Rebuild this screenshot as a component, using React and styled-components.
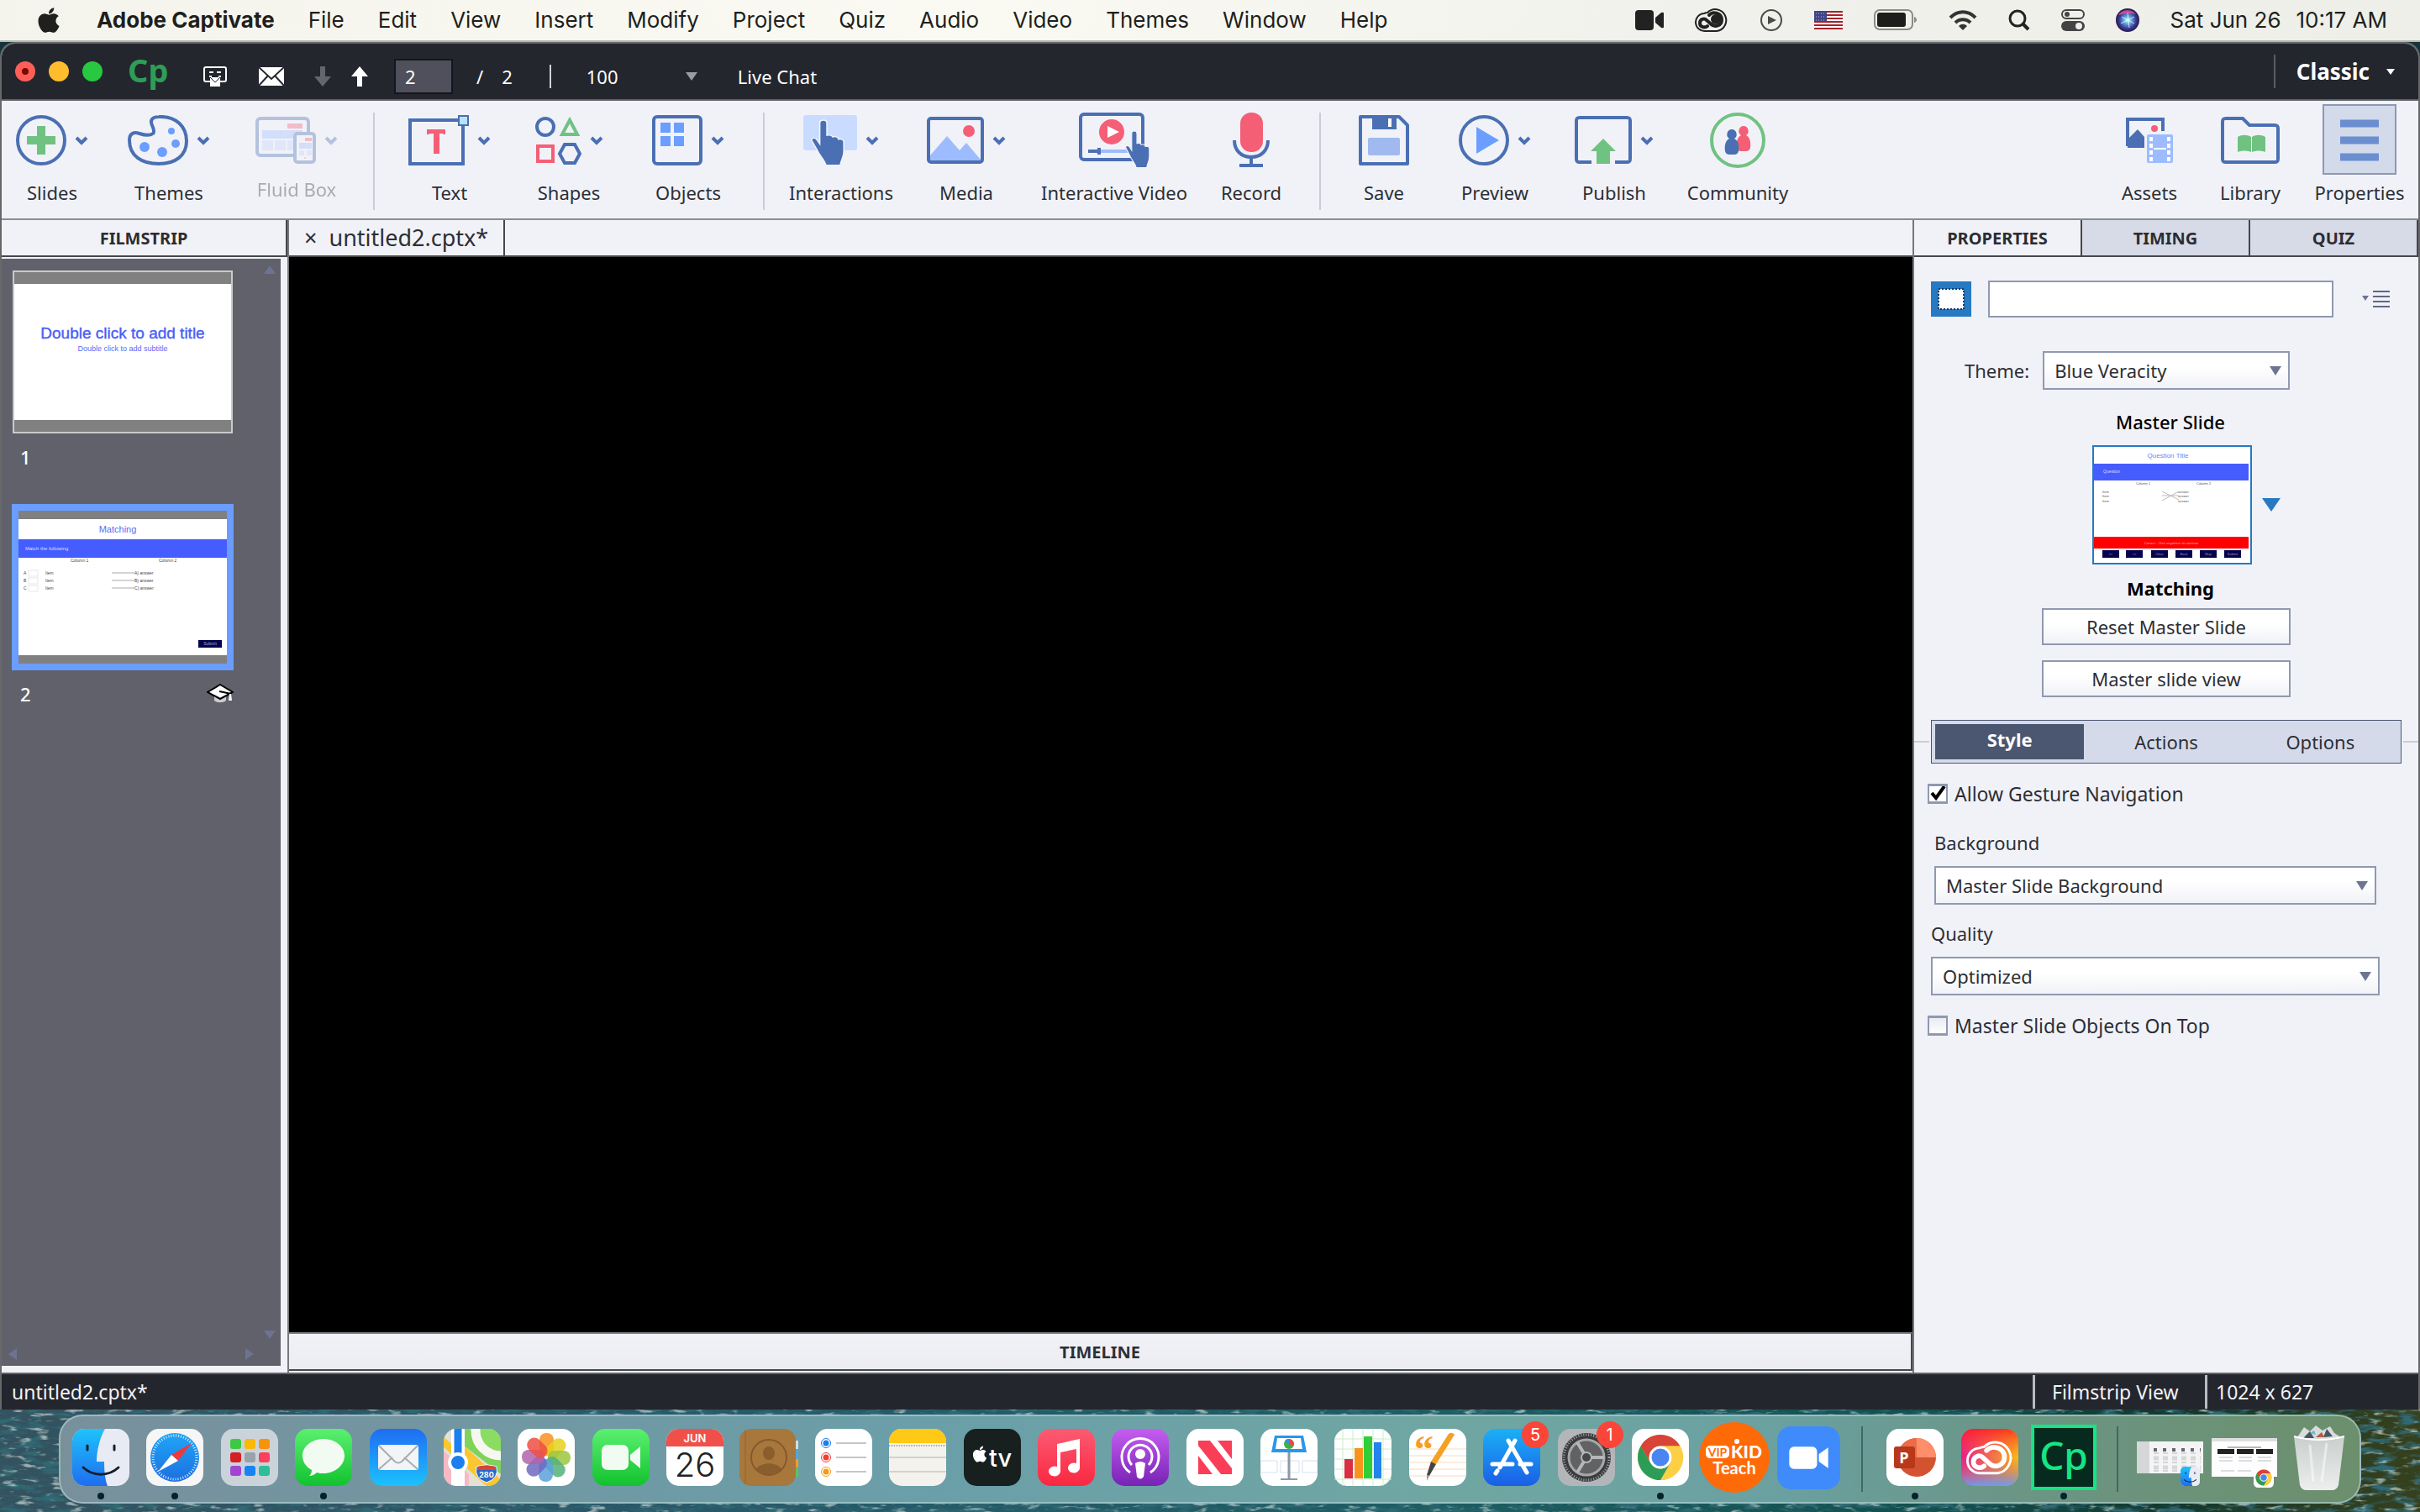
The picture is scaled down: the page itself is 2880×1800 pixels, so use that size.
import React from 'react';
import styled, { createGlobalStyle } from 'styled-components';
import { FaApple } from 'react-icons/fa';

const BLUE = '#4a6fb3';
const SOFT = '#9dbcff';
const MID = '#6c9eff';
const RED = '#f55f76';
const GREEN = '#70c281';

const GlobalStyle = createGlobalStyle`
  * { box-sizing: border-box; }
  body { margin: 0; background: #16333c; }
  button, input, select { font: inherit; color: inherit; margin: 0; }
  button { background: none; border: 0; padding: 0; }
  svg { display: block; flex: none; }
`;

const Desktop = styled.div`
  position: relative;
  display: flex;
  flex-direction: column;
  height: 100vh;
  overflow: hidden;
  font-family: 'Noto Sans', 'Open Sans', sans-serif;
  font-size: 22px;
  line-height: 28px;
  color: #2d2f35;
`;

const Wallpaper = styled.svg`
  position: absolute;
  left: 0;
  bottom: 0;
  width: 100%;
  height: 140px;
`;

/* ---------- mac menu bar ---------- */

const MenuBar = styled.header`
  display: flex;
  align-items: center;
  justify-content: space-between;
  height: 50px;
  padding: 0 39px 0 41px;
  background: linear-gradient(90deg, #f4f4ec, #fafaf2 40%, #f0f1ec 70%, #eeefe8);
  border-bottom: 2px solid #b5b6b1;
  font-family: Inter, sans-serif;
  font-size: 26px;
  color: #1f1f1d;
`;

const Menus = styled.nav`
  display: flex;
  align-items: center;
  gap: 40px;
`;

const MenuItem = styled.button`
  font-weight: ${p => (p.$bold ? 700 : 400)};
`;

const Tray = styled.div`
  display: flex;
  align-items: center;
  gap: 37px;
`;

const Clock = styled.div`
  display: flex;
  gap: 18px;
`;

/* ---------- captivate window ---------- */

const Window = styled.div`
  position: relative;
  flex: 1;
  min-height: 0;
  display: flex;
  flex-direction: column;
  border: 2px solid #67686a;
  border-bottom: 0;
  border-radius: 18px 18px 0 0;
  overflow: hidden;
  background: #f1f2f8;
`;

const TitleBar = styled.div`
  display: flex;
  align-items: center;
  height: 68px;
  padding: 0 28px 0 16px;
  background: #24262e;
  border-bottom: 2px solid #626366;
  color: #fff;
`;

const Lights = styled.div`
  display: flex;
  gap: 16px;
`;

const Light = styled.button`
  display: grid;
  place-items: center;
  width: 24px;
  height: 24px;
  border-radius: 50%;
  background: ${p => p.$color};
  &::after {
    content: '';
    width: 8px;
    height: 8px;
    border-radius: 50%;
    background: ${p => (p.$dirty ? '#7c0800' : 'transparent')};
  }
`;

const CpLogo = styled.div`
  margin-left: 30px;
  width: 90px;
  font-size: 38px;
  line-height: 62px;
  padding-bottom: 4px;
  font-weight: 700;
  color: #2e9e57;
`;

const TitleTools = styled.div`
  display: flex;
  align-items: center;
  height: 100%;
  padding-top: 12px;
`;

const IconButton = styled.button`
  margin-right: ${p => p.$gap}px;
`;

const PageInput = styled.input`
  width: 70px;
  height: 42px;
  padding: 0 11px;
  background: #4f505c;
  border: 2px solid #15161b;
  color: #fff;
`;

const PageTotal = styled.div`
  display: flex;
  gap: 22px;
  padding: 0 44px 0 28px;
`;

const Bar = styled.div`
  width: 2px;
  height: ${p => p.$h}px;
  background: ${p => p.$color};
`;

const Zoom = styled.div`
  display: flex;
  align-items: center;
  width: 222px;
  padding-left: 42px;
  gap: 80px;
`;

const Caret = styled.span`
  width: 0;
  height: 0;
  border: ${p => p.$s}px solid transparent;
  border-bottom: 0;
  border-top: ${p => p.$t}px solid ${p => p.$color};
`;

const Workspace = styled.button`
  display: flex;
  align-items: center;
  gap: 20px;
  margin-left: auto;
  height: 40px;
  padding-left: 25px;
  border-left: 2px solid #5b5d64;
  font-size: 26px;
  font-weight: 700;
`;

/* ---------- toolbar ---------- */

const Toolbar = styled.div`
  display: flex;
  height: 142px;
  padding: 4px 2px 0 0;
  border-bottom: 2px solid #8b8c8f;
`;

const Divider = styled.div`
  width: 2px;
  height: 116px;
  margin: 10px 18px 0;
  background: #cbcdd6;
`;

const Tool = styled.button`
  width: ${p => p.$w}px;
  display: flex;
  flex-direction: column;
  align-items: center;
  opacity: ${p => (p.disabled ? 0.36 : 1)};
  white-space: nowrap;
`;

const ToolIcon = styled.span`
  display: flex;
  align-items: center;
  justify-content: center;
  gap: 10px;
  min-width: 88px;
  height: 84px;
  padding-top: 2px;
  border: 2px solid ${p => (p.$active ? '#8d98b2' : 'transparent')};
  background: ${p => (p.$active ? '#d3daea' : 'transparent')};
`;

const ToolLabel = styled.span`
  line-height: ${p => (p.$raised ? 34 : 42)}px;
`;

const Spacer = styled.div`
  flex: 1;
`;

/* ---------- panels ---------- */

const Main = styled.div`
  flex: 1;
  min-height: 0;
  display: grid;
  grid-template-columns: 340px 1fr 602px;
  border-bottom: 2px solid #636467;
`;

const Column = styled.section`
  display: flex;
  flex-direction: column;
  min-width: 0;
  min-height: 0;
  border-left: ${p => (p.$line ? '2px solid #77787b' : '0')};
`;

const Header = styled.div`
  display: flex;
  height: 44px;
  flex: none;
  border-bottom: 2px solid #45474b;
`;

const PanelTab = styled.button`
  flex: 1;
  padding-top: 2px;
  font-size: 20px;
  font-weight: 700;
  color: #2b2d31;
  background: ${p => (p.$dim ? '#d7dae7' : 'transparent')};
  border-right: 2px solid #45474b;
`;

const DocTab = styled.div`
  display: flex;
  align-items: center;
  gap: 14px;
  padding: 0 18px;
  border-right: 2px solid #45474b;
  font-size: 27px;
`;

const Strip = styled.div`
  flex: 1;
  display: grid;
  grid-template-columns: 1fr 26px;
  grid-template-rows: 1fr 28px;
  margin: 2px 8px 8px 0;
  background: #60616a;
`;

const Slides = styled.div`
  padding: 14px 0 0 12px;
  color: #fff;
`;

const Slide = styled.div`
  width: 264px;
  margin-bottom: 34px;
`;

const Thumb = styled.button`
  display: block;
  width: ${p => (p.$active ? 264 : 262)}px;
  height: ${p => (p.$active ? 198 : 194)}px;
  margin: 0 auto;
  border: ${p => (p.$active ? '8px solid #6a9dff' : '2px solid #c9cacc')};
`;

const SlideFoot = styled.div`
  display: flex;
  align-items: center;
  justify-content: space-between;
  height: 44px;
  margin-top: 6px;
  padding-left: 10px;
  font-weight: 500;
`;

const Scroll = styled.div`
  display: flex;
  flex-direction: ${p => (p.$across ? 'row' : 'column')};
  align-items: center;
  justify-content: space-between;
  padding: ${p => (p.$across ? '0 6px 0 8px' : '8px 6px 4px')};
`;

const Stage = styled.main`
  flex: 1;
  background: #000;
`;

const Timeline = styled.button`
  height: 46px;
  margin-bottom: 2px;
  padding-top: 2px;
  flex: none;
  border-top: 2px solid #7e7f80;
  border-bottom: 2px solid #45474b;
  border-right: 2px solid #45474b;
  font-size: 20px;
  font-weight: 700;
  background: linear-gradient(#f1f2f8, #ececf2);
`;

/* ---------- properties ---------- */

const Props = styled.div`
  padding-top: 28px;
`;

const NameRow = styled.div`
  display: flex;
  align-items: center;
  padding: 0 33px 0 20px;
`;

const NameInput = styled.input`
  flex: 1;
  height: 44px;
  margin: 0 34px 0 20px;
  background: #fff;
  border: 2px solid #8f99af;
`;

const ThemeRow = styled.div`
  display: flex;
  align-items: center;
  gap: 16px;
  margin: 40px 0 24px 60px;
`;

const SelectBox = styled.div`
  position: relative;
  width: ${p => p.$w}px;
  select {
    appearance: none;
    width: 100%;
    height: 46px;
    padding: 0 12px;
    border: 2px solid #8f99af;
    border-radius: 0;
    background: linear-gradient(#fff 40%, #f1f2f7);
  }
  &::after {
    content: '';
    position: absolute;
    right: 10px;
    top: 18px;
    border: 7px solid transparent;
    border-top: 11px solid #6d7592;
    border-bottom: 0;
    pointer-events: none;
  }
`;

const MasterTitle = styled.div`
  text-align: center;
  padding-left: 10px;
  color: #000;
  font-weight: ${p => (p.$bold ? 700 : 500)};
`;

const MasterRow = styled.div`
  display: flex;
  align-items: center;
  gap: 12px;
  margin: 14px 0 14px 212px;
`;

const MasterThumb = styled.button`
  width: 190px;
  height: 142px;
  border: 2px solid #2779c2;
`;

const MasterButton = styled.button`
  display: block;
  width: 296px;
  height: 44px;
  margin: 10px 0 18px 152px;
  border: 2px solid #8f99af;
  background: linear-gradient(#fff 40%, #f1f2f7);
`;

const SubTabs = styled.div`
  display: flex;
  align-items: center;
  margin-top: 27px;
  &::before, &::after {
    content: '';
    height: 2px;
    flex: 0 0 18px;
    background: #cdced4;
  }
`;

const SubTabGroup = styled.div`
  flex: 1;
  display: grid;
  grid-template-columns: repeat(3, 1fr);
  height: 52px;
  margin: 0 2px;
  padding: 4px;
  background: #d5daea;
  border: 1px solid #4b5670;
`;

const SubTab = styled.button`
  padding-bottom: ${p => (p.$active ? 6 : 0)}px;
  margin-right: ${p => (p.$active ? 6 : 0)}px;
  background: ${p => (p.$active ? '#4b5670' : 'transparent')};
  color: ${p => (p.$active ? '#fff' : 'inherit')};
  font-weight: ${p => (p.$active ? 700 : 400)};
`;

const Check = styled.label`
  display: flex;
  align-items: center;
  gap: 8px;
  margin: 22px 0 0 16px;
  font-size: 23px;
  input {
    appearance: none;
    width: 24px;
    height: 24px;
    border: 2px solid #8f99af;
    border-width: 3px 2px;
    background: linear-gradient(#e9ebf3, #fff);
  }
  input:checked {
    background: url("data:image/svg+xml,%3Csvg xmlns='http://www.w3.org/2000/svg' viewBox='0 0 20 18'%3E%3Cpath d='M3 8l5 6L18 0' fill='none' stroke='%23000' stroke-width='4'/%3E%3C/svg%3E") #fff;
  }
`;

const Field = styled.div`
  margin: ${p => p.$top}px 0 0 ${p => p.$left}px;
  label {
    display: block;
    margin-bottom: 14px;
  }
`;

const StatusBar = styled.footer`
  position: relative;
  display: flex;
  align-items: center;
  justify-content: space-between;
  height: 42px;
  flex: none;
  padding-left: 12px;
  background: #24262e;
  color: #f2f2f4;
  font-size: 23px;
`;

const StatusInfo = styled.div`
  display: flex;
  line-height: 40px;
  span {
    padding-left: 20px;
    border-left: 3px solid #b9bac2;
  }
  span:first-child { width: 205px; }
  span:last-child { width: 254px; padding-left: 10px; }
`;

/* ---------- dock ---------- */

const DockArea = styled.div`
  position: relative;
  height: 122px;
  flex: none;
  padding: 6px 70px 0;
`;

const Dock = styled.div`
  display: flex;
  align-items: center;
  justify-content: space-between;
  height: 106px;
  padding: 0 4px;
  border: 2px solid rgba(190, 220, 222, 0.55);
  border-radius: 28px;
  background: linear-gradient(90deg, #78909c, #6a9fa9 38%, #70a6a2 60%, #6aa0a0 75%, #6b9585 85%, #6c8f6c);
`;

const DockItem = styled.button`
  position: relative;
  display: grid;
  place-items: center;
  width: 88px;
  height: 100px;
  padding-bottom: 4px;
  &::after {
    content: '';
    position: absolute;
    left: 40px;
    bottom: 2px;
    width: 8px;
    height: 8px;
    border-radius: 50%;
    background: ${p => (p.$running ? '#06222b' : 'transparent')};
  }
`;

const DockDivider = styled.div`
  width: 2px;
  height: 78px;
  margin: 0 18px;
  background: #3d6a66;
`;

const Badge = styled.span`
  position: absolute;
  top: 5px;
  right: 0;
  width: 32px;
  height: 32px;
  border-radius: 50%;
  background: #fb4538;
  color: #fff;
  font: 20px/32px Inter, sans-serif;
`;

/* ---------- drawings ---------- */

const Svg = ({ w, h, children, ...rest }) => (
  <svg width={w} height={h} viewBox={`0 0 ${w} ${h}`} fill="none" {...rest}>{children}</svg>
);

const Chevron = () => (
  <Svg w={16} h={12}><path d="M2 3l6 6 6-6" stroke={BLUE} strokeWidth="4" /></Svg>
);

const hand = 'M14 0c2.6 0 4 1.6 4 4v16c4-1 6 0 6.5 2 4-1 6 0 6.5 3 4-1 6 1 6 4v12c0 8-3 10-4 18H17c-2-8-7-12-10-20L1 27c-1-4 4-5 6-1l3 5V4c0-2.4 1.4-4 4-4z';

const toolIcons = {
  slides: (
    <Svg w={60} h={60}>
      <circle cx="30" cy="30" r="28" stroke={BLUE} strokeWidth="4" />
      <path d="M30 13v34M13 30h34" stroke={GREEN} strokeWidth="10" />
    </Svg>
  ),
  themes: (
    <Svg w={72} h={60}>
      <path d="M37 2C58 1 70 14 70 31S57 58 37 58 2 49 2 30c0-9 6-10 12-8s12 3 16 0c4-4-3-10-2-15 1-4 4-5 9-5z" stroke={BLUE} strokeWidth="4" />
      <g fill={MID}><circle cx="20" cy="38" r="6" /><circle cx="41" cy="44" r="6" /><circle cx="57" cy="34" r="5" /><circle cx="52" cy="19" r="4" /></g>
    </Svg>
  ),
  fluid: (
    <Svg w={72} h={56}>
      <rect x="2" y="2" width="61" height="44" rx="4" stroke={BLUE} strokeWidth="4" />
      <path d="M38 8h18v6H38z" fill={RED} />
      <path d="M8 16h48v10H8z" fill={SOFT} />
      <path d="M8 28h13v12H8zM23 28h13v12H23zM38 28h8v12h-8z" fill="#c3d6ff" />
      <rect x="47" y="20" width="23" height="34" rx="3" fill="#f1f2f8" stroke={BLUE} strokeWidth="4" />
      <path d="M59 25h8v4h-8z" fill={RED} />
      <path d="M52 31h15v7H52z" fill={SOFT} />
      <path d="M52 40h6v6h-6zM61 40h6v6h-6z" fill="#c3d6ff" />
      <circle cx="59" cy="49" r="1" fill={RED} />
    </Svg>
  ),
  text: (
    <Svg w={72} h={60}>
      <rect x="2" y="6" width="63" height="52" stroke={BLUE} strokeWidth="4" />
      <path d="M22 17h22v6h-2l-1-1h-4v24h-7V22h-4l-2 1h-2z" fill={RED} />
      <rect x="60" y="1" width="11" height="11" fill="#b7e2fa" stroke={BLUE} strokeWidth="2" />
    </Svg>
  ),
  shapes: (
    <Svg w={55} h={58}>
      <circle cx="12" cy="13" r="10" stroke={BLUE} strokeWidth="4" />
      <path d="M41 5l9 17H32z" stroke={GREEN} strokeWidth="4" />
      <rect x="3" y="36" width="18" height="18" stroke={RED} strokeWidth="4" />
      <path d="M35 34h12l6 11-6 11H35l-6-11z" stroke={BLUE} strokeWidth="4" />
    </Svg>
  ),
  objects: (
    <Svg w={60} h={60}>
      <rect x="2" y="2" width="56" height="56" rx="4" stroke={BLUE} strokeWidth="4" />
      <path d="M10 9h12v12H10zM26 9h12v12H26zM10 25h12v12H10zM26 25h12v12H26z" fill={MID} />
    </Svg>
  ),
  interactions: (
    <Svg w={64} h={60}>
      <rect width="64" height="42" rx="3" fill="#c9dcff" />
      <path d={hand} transform="translate(9 6) scale(1.06 .91)" fill={BLUE} stroke="#eef3ff" strokeWidth="1.5" />
    </Svg>
  ),
  media: (
    <Svg w={68} h={56}>
      <path d="M4 52V46l20-23 15 17 8-9 17 20v2z" fill={SOFT} />
      <rect x="2" y="2" width="64" height="52" rx="3" stroke={BLUE} strokeWidth="4" />
      <circle cx="50" cy="17" r="7" fill={RED} />
    </Svg>
  ),
  video: (
    <Svg w={84} h={66}>
      <rect x="2" y="2" width="74" height="54" rx="4" stroke={BLUE} strokeWidth="4" />
      <circle cx="39" cy="23" r="15" fill={RED} />
      <path d="M34 16v14l14-7z" fill="#fff" />
      <path d="M24 46h34" stroke={SOFT} strokeWidth="4" />
      <path d="M11 46h14M24 42v8" stroke={BLUE} strokeWidth="4" />
      <path d={hand} transform="translate(55 22) scale(.78 .74)" fill={BLUE} stroke="#eef3ff" strokeWidth="1.5" />
    </Svg>
  ),
  record: (
    <Svg w={44} h={66}>
      <rect x="9" y="0" width="27" height="47" rx="13" fill={RED} />
      <path d="M2 33c0 12 8 20 20 20s20-8 20-20M22 53v9" stroke={BLUE} strokeWidth="4" />
      <path d="M8 61h28v4H8z" fill={BLUE} />
    </Svg>
  ),
  save: (
    <Svg w={60} h={60}>
      <path d="M2 2h46l10 10v46H2z" stroke={BLUE} strokeWidth="4" strokeLinejoin="round" />
      <path d="M16 2h29v15H16z" fill={BLUE} />
      <path d="M35 4h4v10h-4z" fill="#fff" />
      <rect x="11" y="27" width="38" height="21" rx="2" fill="#a0baf0" />
    </Svg>
  ),
  preview: (
    <Svg w={60} h={60}>
      <circle cx="30" cy="30" r="28" stroke={BLUE} strokeWidth="4" />
      <path d="M21 14l27 16-27 16z" fill={MID} />
    </Svg>
  ),
  publish: (
    <Svg w={68} h={58}>
      <path d="M20 55H6c-3 0-4-1-4-4V6c0-3 1-4 4-4h56c3 0 4 1 4 4v45c0 3-1 4-4 4H48" stroke={BLUE} strokeWidth="4" />
      <path d="M34 27l15 15h-7v15H26V42h-7z" fill={GREEN} />
    </Svg>
  ),
  community: (
    <Svg w={66} h={66}>
      <circle cx="33" cy="33" r="31" stroke={GREEN} strokeWidth="4" />
      <path d="M40 16a6 6 0 0 1 3 11c4 2 6 7 5 15q-1 4-5 4h-6q-4 0-5-4c-1-8 1-13 5-15a6 6 0 0 1 3-11z" fill={RED} />
      <path d="M26 20a6 6 0 0 1 3 11c4 2 6 7 5 15q-1 4-5 4h-6q-4 0-5-4c-1-8 1-13 5-15a6 6 0 0 1 3-11z" fill={BLUE} />
    </Svg>
  ),
  assets: (
    <Svg w={56} h={54}>
      <path d="M2 34V2h42v14" stroke={BLUE} strokeWidth="4" />
      <path d="M2 36V26l12-12 8 9v13z" fill={BLUE} />
      <circle cx="34" cy="13" r="4" fill={RED} />
      <rect x="25" y="20" width="31" height="34" rx="2" fill={SOFT} />
      <path d="M30 23v30M51 23v30" stroke="#fff" strokeWidth="4" strokeDasharray="5 3" />
      <path d="M33 37h15" stroke="#fff" strokeWidth="2" />
    </Svg>
  ),
  library: (
    <Svg w={70} h={56}>
      <path d="M6 2h20l8 8h30c3 0 4 1 4 4v36c0 3-1 4-4 4H6c-3 0-4-1-4-4V6c0-3 1-4 4-4z" stroke={BLUE} strokeWidth="4" />
      <path d="M20 24c5-3 11-3 16 0v18c-5-2-11-2-16 0zM37 24c5-3 11-3 16 0v18c-5-2-11-2-16 0z" fill={GREEN} />
    </Svg>
  ),
  properties: (
    <Svg w={48} h={50}>
      <path d="M1 5h46M1 25h46M1 45h46" stroke="#6a8ed0" strokeWidth="9" />
    </Svg>
  ),
};

const groups = [
  [['slides', 'Slides', 120, 1], ['themes', 'Themes', 158, 1], ['fluid', 'Fluid Box', 146, 1]],
  [['text', 'Text', 142, 1], ['shapes', 'Shapes', 142, 1], ['objects', 'Objects', 142, 1]],
  [['interactions', 'Interactions', 146, 1], ['media', 'Media', 152, 1], ['video', 'Interactive Video', 200], ['record', 'Record', 126]],
  [['save', 'Save', 114], ['preview', 'Preview', 150, 1], ['publish', 'Publish', 134, 1], ['community', 'Community', 160]],
];

const rightTools = [['assets', 'Assets', 116], ['library', 'Library', 124], ['properties', 'Properties', 136]];

const renderTool = ([id, label, width, menu]) => (
  <Tool key={id} $w={width} disabled={id === 'fluid'}>
    <ToolIcon $active={id === 'properties'}>
      {toolIcons[id]}
      {menu && <Chevron />}
    </ToolIcon>
    <ToolLabel $raised={id === 'fluid'}>{label}</ToolLabel>
  </Tool>
);

const CloudMark = ({ color = '#222', fill = 'none', sw = 2 }) => (
  <g stroke={color} strokeWidth={sw} fill="none" strokeLinecap="round">
    <path d="M12 28A10.5 10.5 0 0 1 11 7q2-1 4-1A13 13 0 1 1 26 28z" />
    <circle cx="25" cy="14" r="6" fill={fill} stroke="none" />
    <path d="M17 9C21 4 32 6 32 14.5c0 7-8 10-13 5L14 15c-3-3-8-1-8 3.5 0 5 6 6 9 3.5" strokeWidth={sw * 2} />
  </g>
);

const TrayIcons = () => (
  <>
    <Svg w={34} h={26}><rect y="1" width="22" height="24" rx="4" fill="#222" /><path d="M24 10l7-6q3-1 3 1v16q0 2-3 1l-7-6z" fill="#222" /></Svg>
    <Svg w={40} h={30}><CloudMark fill="#222" /></Svg>
    <Svg w={28} h={28}><circle cx="14" cy="14" r="12" stroke="#4a4a47" strokeWidth="2" /><path d="M10 9l10 5-10 5z" fill="#4a4a47" /></Svg>
    <Svg w={34} h={22}>
      <path d="M0 0h34v22H0z" fill="#fff" />
      <path d="M0 1h34M0 5h34M0 9h34M0 13h34M0 17h34M0 21h34" stroke="#a3232b" strokeWidth="2" />
      <path d="M0 0h15v13H0z" fill="#3f4486" />
      <path d="M2 3h12M2 7h12M2 11h12" stroke="#c5c7de" strokeDasharray="1 2" />
    </Svg>
    <Svg w={52} h={26}>
      <rect x="1" y="1" width="45" height="23" rx="6" stroke="#8b8b87" strokeWidth="2" />
      <rect x="4" y="4" width="34" height="17" rx="3" fill="#1d1d1b" />
      <path d="M48 9c4 1 4 6 0 7z" fill="#8b8b87" />
    </Svg>
    <Svg w={34} h={26}>
      <path d="M2 10c9-9 21-9 30 0M8 16c5-5 13-5 18 0" stroke="#333" strokeWidth="4" />
      <path d="M17 25l-5-5c3-3 7-3 10 0z" fill="#333" />
    </Svg>
    <Svg w={26} h={26}><circle cx="11" cy="11" r="9" stroke="#222" strokeWidth="3" /><path d="M17 17l7 7" stroke="#222" strokeWidth="4" /></Svg>
    <Svg w={28} h={28}>
      <rect x="1" y="2" width="26" height="10" rx="5" stroke="#444" strokeWidth="2" /><circle cx="7" cy="7" r="3" fill="#444" />
      <rect y="15" width="28" height="12" rx="6" fill="#444" /><circle cx="21" cy="21" r="4" fill="#eee" />
    </Svg>
    <Svg w={28} h={28}>
      <defs><radialGradient id="siri"><stop stopColor="#e8fbff" /><stop offset=".3" stopColor="#5fb8e0" /><stop offset=".7" stopColor="#3f3a98" /><stop offset="1" stopColor="#231a48" /></radialGradient></defs>
      <circle cx="14" cy="14" r="14" fill="url(#siri)" />
      <path d="M3 8c4-7 16-8 21-1-6-2-14-1-21 1z" fill="#e0559e" opacity=".8" />
      <path d="M6 18l16-8M14 5l2 18M7 10l15 8" stroke="#fff" opacity=".7" />
    </Svg>
  </>
);

const TitleThumb = () => (
  <svg width="100%" height="100%" viewBox="0 0 258 190" fontFamily="Liberation Sans, sans-serif" textAnchor="middle">
    <path d="M0 0h258v190H0z" fill="#808080" />
    <path d="M0 14h258v162H0z" fill="#fff" />
    <text x="129" y="79" fontSize="19" fill="#4a5ff5" stroke="#4a5ff5" strokeWidth=".4">Double click to add title</text>
    <text x="129" y="94" fontSize="9" fill="#5a6af5">Double click to add subtitle</text>
  </svg>
);

const MatchingThumb = () => (
  <svg width="100%" height="100%" viewBox="0 0 248 182" fontFamily="Liberation Sans, sans-serif" fontSize="5" fill="#444">
    <path d="M0 0h248v182H0z" fill="#808080" />
    <path d="M0 10h248v162H0z" fill="#fff" />
    <path d="M0 34h248v22H0z" fill="#455cff" />
    <text x="118" y="26" fontSize="11" textAnchor="middle" fill="#5b6cf5">Matching</text>
    <text x="8" y="47" fontSize="6" fill="#d8deff">Match the following</text>
    <text x="62" y="61">Column 1</text>
    <text x="167" y="61">Column 2</text>
    {['A', 'B', 'C'].map((letter, i) => (
      <g key={letter}>
        <text x="6" y={76 + i * 9}>{letter}</text>
        <rect x="12" y={71 + i * 9} width="11" height="7" fill="none" stroke="#e8e8e8" />
        <text x="32" y={76 + i * 9}>Item</text>
        <path d={`M111 ${74 + i * 9}h27`} stroke="#aaa" />
        <text x="138" y={76 + i * 9}>{letter}) answer</text>
      </g>
    ))}
    <path d="M214 154h28v9h-28z" fill="#03034f" />
    <text x="228" y="160" textAnchor="middle" fill="#aab">Submit</text>
  </svg>
);

const masterButtons = [[10, '<<'], [38, '>>'], [68, 'Clear'], [97, 'Back'], [126, 'Skip'], [155, 'Submit']];

const MasterDrawing = () => (
  <svg width="100%" height="100%" viewBox="0 0 186 138" fontFamily="Liberation Sans, sans-serif" fontSize="4" fill="#555">
    <path d="M0 0h186v138H0z" fill="#fff" />
    <path d="M0 20h184v20H0z" fill="#455cff" />
    <path d="M0 107h184v14H0z" fill="#f00" />
    <text x="88" y="13" fontSize="8" textAnchor="middle" fill="#7280f5">Question Title</text>
    <text x="11" y="31" fontSize="5" fill="#d8deff">Question</text>
    <text x="50" y="45">Column 1</text>
    <text x="122" y="45">Column 2</text>
    {[54, 59, 65].map(y => (
      <g key={y}><text x="10" y={y + 1}>Item</text><text x="100" y={y + 1}>answer</text></g>
    ))}
    <path d="M81 53l20 10M81 58h20M81 64l20-11" stroke="#bbb" fill="none" />
    <text x="92" y="116" textAnchor="middle" fill="#ffb0b0">Correct - Click anywhere to continue</text>
    {masterButtons.map(([x, label]) => (
      <g key={x}>
        <path d={`M${x} 123h20v9h-20z`} fill="#03034f" />
        <text x={x + 10} y="129" textAnchor="middle" fill="#99a">{label}</text>
      </g>
    ))}
  </svg>
);

const CapIcon = () => (
  <Svg w={32} h={24}>
    <path d="M9 14v6c3 3 11 3 14 0v-6z" fill="#ccc" />
    <path d="M16 1l15 9-15 8L1 10z" fill="#fff" stroke="#000" strokeWidth="2" />
    <path d="M15 9l14 3" stroke="#000" strokeWidth="2" />
    <path d="M27 12h2l1 8h-4z" fill="#fff" />
  </Svg>
);

/* dock icons are drawn on a 68px tile */
const Tile = ({ fill = '#fff', children, size = 68 }) => (
  <svg width={size} height={size} viewBox="0 0 68 68" fill="none">
    <rect width="68" height="68" rx="15" fill={fill} />
    {children}
  </svg>
);

const FinderFace = () => (
  <>
    <path d="M0 15A15 15 0 0 1 15 0h24c-6 10-10 26-10 39h9c0 11 1 21 4 29H15A15 15 0 0 1 0 53z" fill="url(#gFinder)" />
    <path d="M18 20v5M50 20v5M13 46c12 11 30 11 42 0" stroke="#14202c" strokeWidth="3" strokeLinecap="round" />
  </>
);

const ChromeMark = () => (
  <>
    <circle cx="34" cy="34" r="27" fill="#e9b92f" />
    <path d="M10.6 20.5A27 27 0 0 1 57.4 20.5H34a13.5 13.5 0 0 0-11.7 20.2z" fill="#d84437" />
    <path d="M57.4 20.5A27 27 0 0 1 34 61l11.7-20.2A13.5 13.5 0 0 0 34 20.5z" fill="#fdcf45" />
    <path d="M10.6 20.5A27 27 0 0 0 34 61l11.7-20.2a13.5 13.5 0 0 1-23.4 0z" fill="#2c9d57" />
    <circle cx="34" cy="34" r="12" fill="#4b86f0" stroke="#fff" strokeWidth="3" />
  </>
);

const launchColors = ['#3ec943', '#fbb906', '#f7920b', '#d31f26', '#9ba1aa', '#fb3f5c', '#a245d3', '#1783f5', '#2abf97'];
const petals = ['#f8921d', '#e6d21c', '#9cc740', '#54b07a', '#5aa2dc', '#7069c0', '#b163ad', '#ee4f42'];

const dockIcons = {
  Finder: <Tile fill="#e8ebf3"><FinderFace /></Tile>,
  Safari: (
    <Tile fill="#f6f6f6">
      <circle cx="34" cy="34" r="29" fill="url(#gSafari)" />
      <circle cx="34" cy="34" r="26" stroke="#d8efff" strokeWidth="3" strokeDasharray="1 2" />
      <path d="M54 17L38 38l-8-7z" fill="#f0383a" />
      <path d="M14 51l16-20 8 7z" fill="#fff" />
    </Tile>
  ),
  Launchpad: (
    <Tile fill="#cbd3da">
      {launchColors.map((c, i) => <rect key={c} x={11 + (i % 3) * 17} y={12 + Math.floor(i / 3) * 16} width="13" height="12" rx="3" fill={c} />)}
    </Tile>
  ),
  Messages: (
    <Tile fill="url(#gGreen)">
      <path d="M34 12c14 0 25 9 25 20S48 53 34 53c-3 0-5 0-8-1-2 2-5 4-9 4 2-2 3-4 3-7C13 45 9 39 9 32c0-11 11-20 25-20z" fill="#f2fbf2" />
    </Tile>
  ),
  Mail: (
    <Tile fill="url(#gMail)">
      <rect x="10" y="19" width="48" height="30" rx="3" fill="#f2f4f6" />
      <path d="M11 20l19 19q4 3 8 0l19-19M11 48l16-14M57 48L41 34" stroke="#a7adb4" strokeWidth="2" />
    </Tile>
  ),
  Maps: (
    <svg width="68" height="68" viewBox="0 0 68 68" fill="none">
      <defs><clipPath id="tile"><rect width="68" height="68" rx="15" /></clipPath></defs>
      <g clipPath="url(#tile)">
        <path d="M0 0h68v68H0z" fill="#e3e0d6" />
        <path d="M24 0h44v54L24 20z" fill="#7fd35b" />
        <circle cx="68" cy="2" r="30" fill="#8bdc62" stroke="#f7f7f2" strokeWidth="11" />
        <path d="M0 26l30 28v14H0z" fill="#f7b9c4" />
        <path d="M-4 12l68 62M22 24l50 46" stroke="#fac72f" strokeWidth="9" />
        <path d="M17 0v68" stroke="#fff" strokeWidth="16" />
        <path d="M17 0v40" stroke="#1b7ff0" strokeWidth="9" />
        <circle cx="17" cy="40" r="10" fill="#1b7ff0" stroke="#fff" strokeWidth="4" />
        <path d="M39 45q12-4 24 0 3 14-12 19-15-5-12-19z" fill="#2b68c4" stroke="#fff" />
        <path d="M40 45q11-3 22 0v4H40z" fill="#d8443c" />
        <text x="51" y="58" fontSize="9" fontFamily="Inter, sans-serif" fontWeight="700" fill="#fff" textAnchor="middle">280</text>
      </g>
    </svg>
  ),
  Photos: (
    <Tile>
      {petals.map((c, i) => <rect key={c} x="26" y="5" width="17" height="27" rx="8" fill={c} opacity=".85" transform={`rotate(${i * 45} 34 34)`} />)}
    </Tile>
  ),
  FaceTime: (
    <Tile fill="url(#gGreen)">
      <rect x="11" y="19" width="32" height="30" rx="7" fill="#f1fbf2" />
      <path d="M45 31l12-10v26L45 37z" fill="#f1fbf2" />
    </Tile>
  ),
  Calendar: (
    <Tile>
      <path d="M0 21v-6A15 15 0 0 1 15 0h38a15 15 0 0 1 15 15v6z" fill="#f1504a" />
      <g fontFamily="Inter, sans-serif" textAnchor="middle">
        <text x="34" y="16" fontSize="13" fontWeight="600" fill="#fff">JUN</text>
        <text x="34" y="57" fontSize="40" fontWeight="300" fill="#222">26</text>
      </g>
    </Tile>
  ),
  Contacts: (
    <svg width="70" height="68" viewBox="0 0 70 68" fill="none">
      <path d="M60 14h10v10H60z" fill="#dadada" /><path d="M60 25h10v10H60z" fill="#4fa8e0" /><path d="M60 36h10v10H60z" fill="#f59a2b" /><path d="M60 47h10v10H60z" fill="#5fc54f" />
      <rect width="67" height="68" rx="14" fill="#a8773c" />
      <path d="M7 2v64" stroke="#94652f" />
      <circle cx="35" cy="34" r="21" stroke="#85592a" strokeWidth="2" />
      <ellipse cx="35" cy="29" rx="7" ry="8" fill="#8a5d2c" />
      <path d="M20 48c5-9 25-9 30 0-8 8-22 8-30 0z" fill="#8a5d2c" />
    </svg>
  ),
  Reminders: (
    <Tile>
      {['#1a7cf0', '#f13d35', '#f79a12'].map((c, i) => (
        <g key={c}>
          <circle cx="13" cy={17 + i * 17} r="3.5" fill={c} />
          <circle cx="13" cy={17 + i * 17} r="5.5" stroke={c} />
          <path d={`M25 ${17 + i * 17}h36`} stroke="#c4c6c8" strokeWidth="2" />
        </g>
      ))}
    </Tile>
  ),
  Notes: (
    <Tile fill="#f4f2ec">
      <path d="M0 17v-2A15 15 0 0 1 15 0h38a15 15 0 0 1 15 15v2z" fill="#ffc916" />
      <path d="M0 20h68" stroke="#b5ad98" strokeWidth="2" strokeDasharray="1 1" />
      <path d="M0 34h68M0 51h68" stroke="#d5d2ca" strokeWidth="2" />
    </Tile>
  ),
  TV: (
    <Tile fill="#17201f">
      <FaApple x="8" y="19" width="22" height="26" color="#fff" />
      <text x="30" y="45" fontSize="29" fontFamily="Inter, sans-serif" fontWeight="500" fill="#fff">tv</text>
    </Tile>
  ),
  Music: (
    <Tile fill="url(#gMusic)">
      <path d="M23 18l27-6v35a7 6 0 1 1-4-6V24l-19 4v23a7 6 0 1 1-4-6z" fill="#fff" />
    </Tile>
  ),
  Podcasts: (
    <Tile fill="url(#gPod)">
      <g stroke="#fff" strokeWidth="3">
        <path d="M22 52a22 22 0 1 1 24 0" /><path d="M24 43a14 14 0 1 1 20 0" />
      </g>
      <circle cx="34" cy="30" r="6" fill="#fff" />
      <path d="M28 41q6-4 12 0l-2 16q-4 5-8 0z" fill="#fff" />
    </Tile>
  ),
  News: (
    <Tile>
      <path d="M14 14h14l26 33v7H41L14 20z" fill="#fb3e57" />
      <path d="M37 14h17v22zM14 32v22h17z" fill="#fb3e57" />
    </Tile>
  ),
  Keynote: (
    <Tile>
      <path d="M0 38h20v14H0zM24 38h22v14H24zM50 38h18v14H50z" stroke="#d3e0f2" />
      <path d="M34 28v32" stroke="#8d99a8" strokeWidth="3" />
      <path d="M24 60h20" stroke="#8d99a8" strokeWidth="2" />
      <path d="M17 8h34l4 20H13z" fill="#2797ee" />
      <path d="M20 11h28l2 13H18z" fill="#fff" />
      <circle cx="34" cy="18" r="6" fill="#38b24a" /><path d="M34 18v-6a6 6 0 0 1 5 9z" fill="#f0483e" /><path d="M34 18l-5-4a6 6 0 0 1 5-2z" fill="#3b8cf0" />
    </Tile>
  ),
  Numbers: (
    <Tile>
      <path d="M10 0v68M22 0v68M34 0v68M46 0v68M58 0v68M0 12h68M0 24h68M0 36h68M0 48h68M0 60h68" stroke="#cdeccb" />
      <path d="M12 36h10v23H12z" fill="#d82f44" /><path d="M24 23h10v36H24z" fill="#f8941c" /><path d="M35 9h10v50H35z" fill="#30cf3a" /><path d="M47 16h9v43h-9z" fill="#2384ec" />
    </Tile>
  ),
  Pages: (
    <Tile>
      <path d="M0 24h68M0 32h68M0 40h68M0 48h68M0 56h68" stroke="#f7dcb9" />
      <text x="6" y="40" fontSize="46" fontFamily="Liberation Serif, serif" fontWeight="700" fill="#f79d1e">“</text>
      <path d="M47 6q4-3 7 1L32 42l-6-3z" fill="#f5a022" /><path d="M26 39l6 3-8 14-3-1z" fill="#444" /><path d="M21 55l3 1-3 6z" fill="#999" />
    </Tile>
  ),
  'App Store': (
    <Tile fill="url(#gStore)">
      <path d="M38 14L20 46M30 14l22 38M11 42h24M44 42h13M17 50l-2 3" stroke="#fff" strokeWidth="5" strokeLinecap="round" />
    </Tile>
  ),
  Settings: (
    <Tile fill="#b3b6b9">
      <circle cx="34" cy="34" r="29" fill="#3a3b3d" />
      <circle cx="34" cy="34" r="27" stroke="#a5a7a9" strokeWidth="3" strokeDasharray="1 2" />
      <circle cx="34" cy="34" r="21" fill="#606264" stroke="#a5a7a9" strokeWidth="3" />
      <path d="M34 34h21M34 34L23 16M34 34L23 52" stroke="#b5b7b9" strokeWidth="4" />
      <circle cx="34" cy="34" r="6" fill="#46484a" stroke="#b5b7b9" strokeWidth="2" />
    </Tile>
  ),
  Chrome: <Tile><ChromeMark /></Tile>,
  VIPKid: (
    <svg width="84" height="84" viewBox="0 0 84 84" fill="none">
      <circle cx="42" cy="42" r="42" fill="#ff6a08" />
      <rect x="8" y="28" width="28" height="15" rx="5" fill="#fff" />
      <text x="22" y="41" fontSize="14" fontFamily="Lato, sans-serif" fontWeight="700" fill="#ff6a08" textAnchor="middle">VIP</text>
      <text x="38" y="43" fontSize="21" fontFamily="Lato, sans-serif" fontWeight="900" fill="#fff">KID</text>
      <circle cx="45" cy="23" r="3" fill="#fff" />
      <text x="42" y="62" fontSize="20" fontFamily="Lato, sans-serif" fontWeight="700" fill="#fff" textAnchor="middle">Teach</text>
    </svg>
  ),
  Zoom: (
    <Tile fill="#3f8bfb" size={75}>
      <rect x="13" y="22" width="30" height="24" rx="5" fill="#fff" />
      <path d="M45 30l10-7v22l-10-7z" fill="#fff" />
    </Tile>
  ),
  PowerPoint: (
    <Tile>
      <circle cx="36" cy="34" r="23" fill="#d35230" /><path d="M36 11a23 23 0 0 1 23 23H36z" fill="#ff8f6b" /><path d="M36 11a23 23 0 0 0-23 23h23z" fill="#ed6c47" />
      <rect x="9" y="21" width="25" height="26" rx="3" fill="#b8381b" />
      <text x="21" y="41" fontSize="18" fontFamily="Open Sans, sans-serif" fontWeight="700" fill="#fff" textAnchor="middle">P</text>
    </Tile>
  ),
  'Creative Cloud': (
    <Tile fill="url(#gCloud)">
      <rect width="68" height="68" rx="15" fill="url(#gCloud2)" />
      <g transform="translate(6 13) scale(1.42)"><CloudMark color="#fff" /></g>
    </Tile>
  ),
  Captivate: (
    <svg width="78" height="78" viewBox="0 0 78 78">
      <rect x="2" y="2" width="74" height="74" fill="#062a1e" stroke="#14e585" strokeWidth="4" />
      <text x="39" y="54" fontSize="46" fontFamily="Noto Sans, sans-serif" fontWeight="500" fill="#14e585" textAnchor="middle">Cp</text>
    </svg>
  ),
  'Finder window': (
    <svg width="80" height="68" viewBox="0 0 80 68" fill="none">
      <path d="M0 15h79v38H0z" fill="#f4f4f4" /><path d="M0 15h15v38H0z" fill="#d5d7d8" />
      <path d="M20 25h56" stroke="#667" strokeWidth="4" strokeDasharray="4 7" />
      <path d="M20 35h56M20 46h56" stroke="#d5d7da" strokeWidth="5" strokeDasharray="6 5" />
      <path d="M20 29h56M20 40h56M20 50h56" stroke="#b5b7ba" strokeDasharray="6 5" />
      <svg x="52" y="45" width="23" height="23" viewBox="0 0 68 68"><rect width="68" height="68" rx="15" fill="#e8ebf3" /><FinderFace /></svg>
    </svg>
  ),
  'Chrome window': (
    <svg width="80" height="72" viewBox="0 0 80 72" fill="none">
      <path d="M1 13h78v46H1z" fill="#fdfdfd" /><path d="M1 13h78v4H1z" fill="#dcdee1" />
      <path d="M20 24h40" stroke="#777" /><path d="M8 29h20M31 29h20M54 29h20" stroke="#222" strokeWidth="6" />
      <path d="M10 36h16M33 36h16M56 36h16M10 40h16M33 40h16M56 40h16M12 52h16M32 52h16" stroke="#b9bdc6" />
      <svg x="51" y="48" width="24" height="24" viewBox="0 0 68 68"><rect width="68" height="68" rx="15" fill="#fff" /><ChromeMark /></svg>
    </svg>
  ),
  Trash: (
    <svg width="62" height="78" viewBox="0 0 62 78" fill="none">
      <path d="M5 15L13 3l7 5 7-7 8 6 9-5 5 8 8 5-5 8H10z" fill="#d8dcdc" />
      <path d="M12 16l8-8 5 8zM36 15l4-10 7 9z" fill="#4a5560" /><path d="M27 15l7-6 3 6z" fill="#b75b3d" /><path d="M20 10l5-3 2 5z" fill="#68b6dc" />
      <path d="M1 14q30 8 60 0l-7 58q-2 6-8 6H16q-6 0-8-6z" fill="url(#gTrash)" />
      <path d="M1 14q30 8 60 0" stroke="#fff" strokeWidth="2" />
      <path d="M20 24l4 44M40 22l-6 46" stroke="#fff" strokeWidth="3" opacity=".5" />
    </svg>
  ),
};

const dockGroups = [
  ['Finder', 'Safari', 'Launchpad', 'Messages', 'Mail', 'Maps', 'Photos', 'FaceTime', 'Calendar', 'Contacts', 'Reminders', 'Notes', 'TV', 'Music', 'Podcasts', 'News', 'Keynote', 'Numbers', 'Pages', 'App Store', 'Settings', 'Chrome', 'VIPKid', 'Zoom'],
  ['PowerPoint', 'Creative Cloud', 'Captivate'],
  ['Finder window', 'Chrome window', 'Trash'],
];
const running = ['Finder', 'Safari', 'Messages', 'Chrome', 'PowerPoint', 'Captivate'];
const badges = { 'App Store': 5, Settings: 1 };

const Grad = ({ id, from, to, across }) => (
  <linearGradient id={id} x2={across ? 1 : 0} y2={across ? 0 : 1}>
    <stop stopColor={from} />
    <stop offset="1" stopColor={to} />
  </linearGradient>
);

const Water = () => (
  <Wallpaper>
    <defs>
      <linearGradient id="sea">
        <stop stopColor="#34525f" /><stop offset=".3" stopColor="#28596a" /><stop offset=".6" stopColor="#1d5d62" />
        <stop offset=".8" stopColor="#12504f" /><stop offset=".9" stopColor="#12372d" /><stop offset="1" stopColor="#37401c" />
      </linearGradient>
      <filter id="foam" x="0" y="0" width="100%" height="100%">
        <feTurbulence type="fractalNoise" baseFrequency=".05 .18" numOctaves="3" seed="4" />
        <feColorMatrix values="0 0 0 0 .56  0 0 0 0 .66  0 0 0 0 .64  5 0 0 0 -2.9" />
      </filter>
      <filter id="deep" x="0" y="0" width="100%" height="100%">
        <feTurbulence type="fractalNoise" baseFrequency=".04 .14" numOctaves="3" seed="11" />
        <feColorMatrix values="0 0 0 0 .03  0 0 0 0 .14  0 0 0 0 .17  4 0 0 0 -1.9" />
      </filter>
      <Grad id="gFinder" from="#1ec3fb" to="#1f6df0" />
      <Grad id="gSafari" from="#1fa6f7" to="#1d6fe0" />
      <Grad id="gGreen" from="#5bf070" to="#12c22f" />
      <Grad id="gMail" from="#1f6df2" to="#1cc2fd" />
      <Grad id="gMusic" from="#fc5b73" to="#fa2740" />
      <Grad id="gPod" from="#c55df0" to="#7723b4" />
      <Grad id="gStore" from="#1ab0f6" to="#1b5ee6" />
      <Grad id="gCloud" from="#e8159a" to="#f7c614" across />
      <linearGradient id="gCloud2" x2="0" y2="1">
        <stop stopColor="#ff1a1a" stopOpacity=".8" /><stop offset=".5" stopColor="#ff5a30" stopOpacity=".1" /><stop offset="1" stopColor="#6a9cf0" />
      </linearGradient>
      <Grad id="gTrash" from="#c9cfcd" to="#eceeed" />
    </defs>
    <rect width="100%" height="140" fill="url(#sea)" />
    <rect width="100%" height="140" filter="url(#deep)" />
    <rect width="100%" height="140" filter="url(#foam)" opacity=".7" />
  </Wallpaper>
);

const menuNames = ['File', 'Edit', 'View', 'Insert', 'Modify', 'Project', 'Quiz', 'Audio', 'Video', 'Themes', 'Window', 'Help'];

function FilmstripPanel() {
  return (
    <Column>
      <Header><PanelTab>FILMSTRIP</PanelTab></Header>
      <Strip>
        <Slides>
          <Slide>
            <Thumb><TitleThumb /></Thumb>
            <SlideFoot>1</SlideFoot>
          </Slide>
          <Slide>
            <Thumb $active><MatchingThumb /></Thumb>
            <SlideFoot>2<CapIcon /></SlideFoot>
          </Slide>
        </Slides>
        <Scroll>
          <Svg w={14} h={10}><path d="M7 0l7 10H0z" fill="#6d7392" /></Svg>
          <Svg w={14} h={10}><path d="M7 10l7-10H0z" fill="#6d7392" /></Svg>
        </Scroll>
        <Scroll $across>
          <Svg w={10} h={14}><path d="M0 7l10-7v14z" fill="#6d7392" /></Svg>
          <Svg w={10} h={14}><path d="M10 7L0 0v14z" fill="#6d7392" /></Svg>
        </Scroll>
      </Strip>
    </Column>
  );
}

function PropertiesPanel() {
  return (
    <Column $line>
      <Header>
        <PanelTab>PROPERTIES</PanelTab>
        <PanelTab $dim>TIMING</PanelTab>
        <PanelTab $dim>QUIZ</PanelTab>
      </Header>
      <Props>
        <NameRow>
          <Svg w={48} h={42}>
            <path d="M0 0h48v42H0z" fill="#2779c2" />
            <rect x="9" y="9" width="30" height="24" fill="#fff" stroke="#123a66" strokeWidth="2" strokeDasharray="2 2" />
          </Svg>
          <NameInput type="text" aria-label="Slide name" />
          <Svg w={34} h={22}>
            <path d="M0 7h8l-4 6z" fill="#6d7592" />
            <path d="M13 2h20M13 8h20M13 14h20M13 20h20" stroke="#5f6783" strokeWidth="2" />
          </Svg>
        </NameRow>
        <ThemeRow>
          <label htmlFor="theme">Theme:</label>
          <SelectBox $w={294}><select id="theme"><option>Blue Veracity</option></select></SelectBox>
        </ThemeRow>
        <MasterTitle>Master Slide</MasterTitle>
        <MasterRow>
          <MasterThumb><MasterDrawing /></MasterThumb>
          <Caret $s={11} $t={16} $color="#2779c2" />
        </MasterRow>
        <MasterTitle $bold>Matching</MasterTitle>
        <MasterButton>Reset Master Slide</MasterButton>
        <MasterButton>Master slide view</MasterButton>
        <SubTabs>
          <SubTabGroup>
            <SubTab $active>Style</SubTab>
            <SubTab>Actions</SubTab>
            <SubTab>Options</SubTab>
          </SubTabGroup>
        </SubTabs>
        <Check><input type="checkbox" defaultChecked />Allow Gesture Navigation</Check>
        <Field $top={30} $left={24}>
          <label htmlFor="background">Background</label>
          <SelectBox $w={526}><select id="background"><option>Master Slide Background</option></select></SelectBox>
        </Field>
        <Field $top={20} $left={20}>
          <label htmlFor="quality">Quality</label>
          <SelectBox $w={534}><select id="quality"><option>Optimized</option></select></SelectBox>
        </Field>
        <Check><input type="checkbox" />Master Slide Objects On Top</Check>
      </Props>
    </Column>
  );
}

export default function App() {
  return (
    <Desktop>
      <GlobalStyle />
      <Water />
      <MenuBar>
        <Menus>
          <FaApple size={34} />
          <MenuItem $bold>Adobe Captivate</MenuItem>
          {menuNames.map(name => <MenuItem key={name}>{name}</MenuItem>)}
        </Menus>
        <Tray>
          <TrayIcons />
          <Clock><span>Sat Jun 26</span><span>10:17 AM</span></Clock>
        </Tray>
      </MenuBar>

      <Window>
        <TitleBar>
          <Lights>
            <Light $color="#ff5f57" $dirty aria-label="Close" />
            <Light $color="#febc2e" aria-label="Minimize" />
            <Light $color="#28c840" aria-label="Zoom" />
          </Lights>
          <CpLogo>Cp</CpLogo>
          <TitleTools>
            <IconButton $gap={38} aria-label="Preview">
              <Svg w={28} h={26}>
                <rect x="1" y="2" width="26" height="17" rx="2" stroke="#fff" strokeWidth="2" />
                <path d="M7 8h5M16 8h5M7 13h3M18 13h3" stroke="#fff" strokeWidth="2" />
                <path d="M8 14h12v11H8z" fill="#fff" /><path d="M8 14l6 6 6-6" stroke="#24262e" />
              </Svg>
            </IconButton>
            <IconButton $gap={35} aria-label="Mail">
              <Svg w={30} h={22}>
                <path d="M0 0h30v22H0z" fill="#fff" />
                <path d="M0 0l15 14L30 0M0 22l11-12M30 22L19 10" stroke="#24262e" strokeWidth="2" />
              </Svg>
            </IconButton>
            <IconButton $gap={22} aria-label="Next slide">
              <Svg w={22} h={24}><path d="M8 0h6v12h7L11 24 1 12h7z" fill="#65666d" /></Svg>
            </IconButton>
            <IconButton $gap={30} aria-label="Previous slide">
              <Svg w={22} h={24}><path d="M8 24h6V12h7L11 0 1 12h7z" fill="#fff" /></Svg>
            </IconButton>
            <PageInput type="text" defaultValue="2" aria-label="Slide number" />
            <PageTotal><span>/</span><span>2</span></PageTotal>
            <Bar $h={28} $color="#d0d0d4" />
            <Zoom>100<Caret $s={7} $t={10} $color="#9a9ba3" /></Zoom>
            <span>Live Chat</span>
          </TitleTools>
          <Workspace>Classic<Caret $s={5} $t={7} $color="#fff" /></Workspace>
        </TitleBar>

        <Toolbar>
          {groups.map((group, i) => (
            <React.Fragment key={i}>
              {i > 0 && <Divider />}
              {group.map(renderTool)}
            </React.Fragment>
          ))}
          <Spacer />
          {rightTools.map(renderTool)}
        </Toolbar>

        <Main>
          <FilmstripPanel />
          <Column $line>
            <Header><DocTab><span>×</span>untitled2.cptx*</DocTab></Header>
            <Stage />
            <Timeline>TIMELINE</Timeline>
          </Column>
          <PropertiesPanel />
        </Main>

        <StatusBar>
          <span>untitled2.cptx*</span>
          <StatusInfo><span>Filmstrip View</span><span>1024 x 627</span></StatusInfo>
        </StatusBar>
      </Window>

      <DockArea>
        <Dock>
          {dockGroups.map((names, i) => (
            <React.Fragment key={i}>
              {i > 0 && <DockDivider />}
              {names.map(name => (
                <DockItem key={name} aria-label={name} $running={running.includes(name)}>
                  {dockIcons[name]}
                  {badges[name] && <Badge>{badges[name]}</Badge>}
                </DockItem>
              ))}
            </React.Fragment>
          ))}
        </Dock>
      </DockArea>
    </Desktop>
  );
}
